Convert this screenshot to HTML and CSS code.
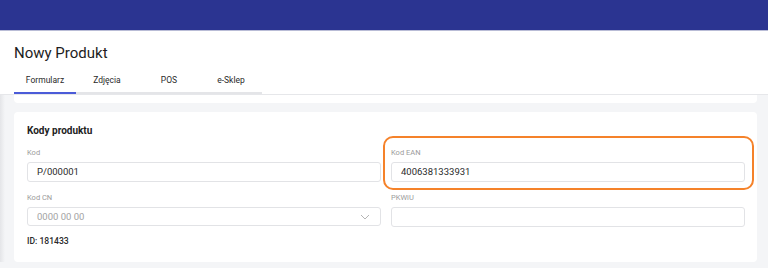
FILE: index.html
```html
<!DOCTYPE html>
<html lang="pl">
<head>
    <meta charset="UTF-8">
    <meta name="viewport" content="width=device-width, initial-scale=1.0">
    <title>Nowy Produkt</title>
    <link rel="stylesheet" href="styles.css">
</head>
<body>
    <div class="topbar"></div>

    <div class="page-head">
        <h1>Nowy Produkt</h1>
        <div class="tabs">
            <div class="tab active">Formularz</div>
            <div class="tab">Zdjęcia</div>
            <div class="tab">POS</div>
            <div class="tab">e-Sklep</div>
        </div>
    </div>

    <div class="content">
        <div class="card card-prev"></div>

        <div class="card codes">
            <h2>Kody produktu</h2>
            <div class="grid">
                <div class="field">
                    <label>Kod</label>
                    <div class="input">P/000001</div>
                </div>
                <div class="field highlight">
                    <label>Kod EAN</label>
                    <div class="input">4006381333931</div>
                </div>
                <div class="field">
                    <label>Kod CN</label>
                    <div class="input select">
                        <span class="placeholder">0000 00 00</span>
                        <svg width="10" height="6" viewBox="0 0 10 6"><path d="M1 1l4 4 4-4" fill="none" stroke="#b5b5b5" stroke-width="1"/></svg>
                    </div>
                </div>
                <div class="field">
                    <label>PKWiU</label>
                    <div class="input"></div>
                </div>
            </div>
            <div class="record-id">ID: 181433</div>
        </div>
    </div>
</body>
</html>
```

FILE: styles.css
```css
/* Base */
body {
    margin: 0;
    background-color: #f4f5f7;
    font-family: Roboto, 'Liberation Sans', sans-serif;
    color: #222;
}

/* Top bar */
.topbar {
    height: 30px;
    background-color: #2b3491;
    border-bottom: 1px solid #b9bcd6;
}

/* Page header with tabs */
.page-head {
    background-color: #fff;
    padding: 11px 14px 0;
    border-bottom: 1px solid #e6e7ea;
}

.page-head h1 {
    margin: 0;
    font-size: 15px;
    font-weight: 400;
    line-height: 22px;
    color: #1d1d1d;
}

.tabs {
    display: flex;
    margin-top: 6px;
}

.tab {
    width: 62px;
    height: 22px;
    line-height: 20px;
    text-align: center;
    font-size: 8.5px;
    font-weight: 400;
    color: #2a2a2a;
    border-bottom: 2px solid #e4e5e8;
}

.tab.active {
    border-bottom-color: #4b5bd8;
}

/* Content */
.content {
    padding: 0 11px 0 14px;
    background: linear-gradient(to right, #e4e5e8, #f4f5f7 5px);
}

.card {
    background-color: #fff;
    border-radius: 4px;
}

.card-prev {
    height: 8px;
    border-radius: 0 0 4px 4px;
}

.codes {
    margin-top: 9px;
    height: 150px;
    padding: 11px 12px 0 13px;
    box-sizing: border-box;
}

.codes h2 {
    margin: 0;
    font-size: 10px;
    font-weight: 700;
    line-height: 16px;
    color: #222;
}

.grid {
    display: grid;
    grid-template-columns: 1fr 1fr;
    column-gap: 10px;
    row-gap: 11px;
    margin-top: 9px;
}

.field label {
    display: block;
    font-size: 7.5px;
    line-height: 10px;
    color: #9b9b9b;
    margin-bottom: 4px;
}

.input {
    height: 20px;
    box-sizing: border-box;
    border: 1px solid #e2e3e6;
    border-radius: 3px;
    padding: 0 9px;
    font-size: 9.5px;
    line-height: 18px;
    color: #2a2a2a;
}

.select {
    height: 19px;
    line-height: 17px;
    display: flex;
    justify-content: space-between;
    align-items: center;
}

.placeholder {
    color: #a3a3a3;
}

.select svg {
    margin-right: 1px;
}

/* Orange highlight around the EAN field */
.highlight {
    position: relative;
}

.highlight::after {
    content: "";
    position: absolute;
    top: -12px;
    left: -8px;
    right: -9px;
    bottom: -8px;
    border: 2.5px solid #f5822a;
    border-radius: 10px;
}

.record-id {
    margin-top: 8px;
    font-size: 8.6px;
    font-weight: 500;
    line-height: 12px;
    color: #2a2a2a;
}
```
